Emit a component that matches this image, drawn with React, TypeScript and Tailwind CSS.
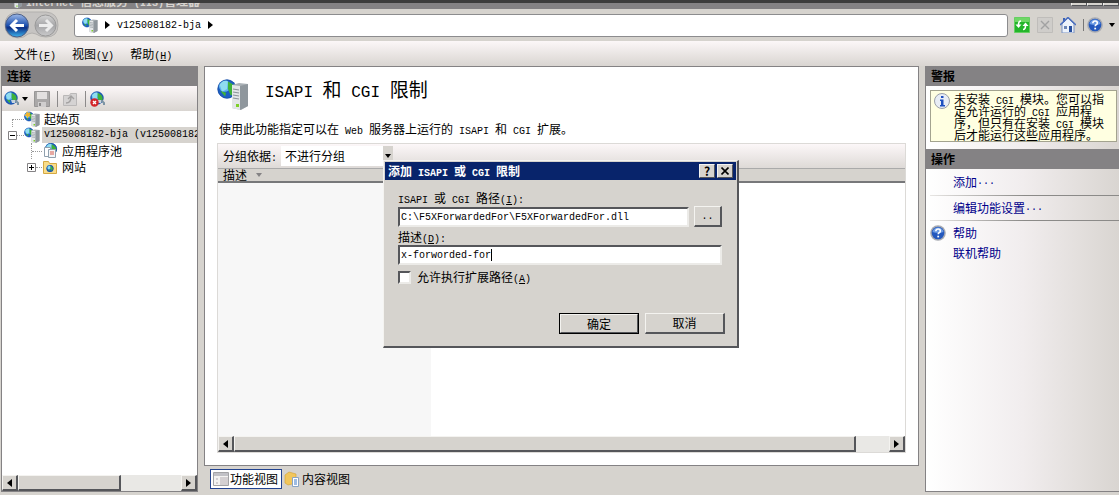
import { useState, type ReactNode } from 'react';

const RAISED =
  'border border-t-[#f4f3f0] border-l-[#f4f3f0] border-r-[#55565a] border-b-[#55565a] bg-[#d6d3ce]';
const SUNKEN =
  'border-2 border-t-[#55565a] border-l-[#55565a] border-r-[#ecebe8] border-b-[#ecebe8] bg-white';

// Latin runs use a half-width monospace face next to the full-width CJK glyphs
function Mixed({ text, latin = 'text-[10px]' }: { text: string; latin?: string }) {
  const runs = text.split(/([\x20-\x7e]+)/).filter(Boolean);
  return (
    <>
      {runs.map((run, i) =>
        /^[\x20-\x7e]/.test(run) ? (
          <span key={i} className={`leading-0 whitespace-pre-wrap font-['Liberation_Mono',monospace] ${latin}`}>
            {run}
          </span>
        ) : (
          run
        ),
      )}
    </>
  );
}

function Key({ letter }: { letter: string }) {
  return (
    <span className="font-['Liberation_Mono',monospace] text-[10px] leading-0">
      (<u>{letter}</u>)
    </span>
  );
}

function Globe({ cx, cy, r }: { cx: number; cy: number; r: number }) {
  return (
    <g>
      <circle cx={cx} cy={cy} r={r} fill="#1d5fc4" />
      <circle cx={cx - r * 0.25} cy={cy - r * 0.3} r={r * 0.6} fill="#5fb4f0" />
      <path
        d={`M${cx - r * 0.8} ${cy - r * 0.5} Q${cx - r * 0.2} ${cy - r * 1.1} ${cx + r * 0.1} ${cy - r * 0.8} L${cx} ${cy} L${cx - r * 0.5} ${cy + r * 0.3} Z`}
        fill="#8fdcf0"
      />
      <path
        d={`M${cx + r * 0.1} ${cy - r * 0.8} Q${cx + r} ${cy - r * 0.4} ${cx + r * 0.9} ${cy + r * 0.3} L${cx + r * 0.4} ${cy + r * 0.7} L${cx + r * 0.1} ${cy} Z`}
        fill="#3fb23a"
      />
      <path
        d={`M${cx - r * 0.7} ${cy + r * 0.2} L${cx - r * 0.1} ${cy + r * 0.4} L${cx - r * 0.2} ${cy + r * 0.8} Z`}
        fill="#3fb23a"
      />
      <circle cx={cx} cy={cy} r={r - 0.3} fill="none" stroke="#17499b" strokeWidth="0.6" />
    </g>
  );
}

function ServerIcon({ className = 'size-4', star = false }: { className?: string; star?: boolean }) {
  return (
    <svg viewBox="0 0 32 32" className={`shrink-0 ${className}`}>
      <Globe cx={10} cy={11} r={9.5} />
      {star && <path d="M6 0l2 4 5-2-2 5 3 3-5 1-2 4-2-5-5-1 4-3z" fill="#f3b42c" />}
      <path d="M15 7l7-2 9 1v22l-7 4-9-2z" fill="#a9b0b5" />
      <path d="M15 7l8 1v24l-8-2z" fill="#e3e6e8" />
      <path d="M23 8l8-2v22l-8 4z" fill="#8f979d" />
      <path d="M16 11l6 1M16 14l6 1M16 17l6 1M16 20l6 1" stroke="#8a9299" strokeWidth="1.2" />
      <path d="M19 26h3v3h-3z" fill="#7fd02a" />
    </svg>
  );
}

function ConnectIcon({ remove = false }: { remove?: boolean }) {
  return (
    <svg viewBox="0 0 16 16" className="size-4 shrink-0">
      <Globe cx={7} cy={7} r={6.5} />
      <path d="M8 10h4l2 2v2" fill="none" stroke="#7c94a4" strokeWidth="2" />
      <path d="M7 9h4v3H8z" fill="#c6d4dc" />
      {remove && (
        <g>
          <circle cx="4.5" cy="11.5" r="4.2" fill="#d3262b" />
          <path d="M3 10l3 3M6 10l-3 3" stroke="#fff" strokeWidth="1.4" />
        </g>
      )}
    </svg>
  );
}

function HelpIcon() {
  return (
    <svg viewBox="0 0 16 16" className="size-4 shrink-0">
      <circle cx="8" cy="8" r="7.8" fill="#a8abb2" />
      <circle cx="8" cy="8" r="6.3" fill="#2458bd" />
      <path d="M2.5 7a5.6 5.6 0 0 1 11 0q-5.5 2-11 0" fill="#6c9be4" />
      <path
        d="M5.8 6.2q.2-2.2 2.3-2.2 2.2 0 2.2 1.9 0 1.2-1.2 1.8-.9.5-.9 1.5"
        fill="none"
        stroke="#fff"
        strokeWidth="1.6"
      />
      <path d="M7.3 10.7h1.8v1.7H7.3z" fill="#fff" />
    </svg>
  );
}

function NavButtons() {
  return (
    <div className="relative flex h-7 w-14 shrink-0 items-center gap-1">
      <svg viewBox="0 0 56 28" className="absolute inset-0 size-full">
        <defs>
          <linearGradient id="back" x2="0" y2="1">
            <stop offset="0" stopColor="#9db9e8" />
            <stop offset=".5" stopColor="#1c4fae" />
            <stop offset=".6" stopColor="#0d2f86" />
            <stop offset="1" stopColor="#3cb4ee" />
          </linearGradient>
          <linearGradient id="fwd" x2="0" y2="1">
            <stop offset="0" stopColor="#d3d3d3" />
            <stop offset=".5" stopColor="#a6a6a8" />
            <stop offset="1" stopColor="#c9c9ca" />
          </linearGradient>
        </defs>
        <path
          d="M14 1h28q12 1 12 13t-12 12q-6 0-10-3-4-2-8 0-4 4-10 4Q1 26 1 14T14 1"
          fill="#c6c4c2"
          stroke="#b2b0ae"
        />
        <circle cx="13" cy="14.5" r="11.5" fill="url(#back)" stroke="#4d5f86" />
        <circle cx="41.500" cy="14.500" r="10.500" fill="url(#fwd)" stroke="#999" />
        <path d="M20 14.5H8M13 9l-5.500 5.500L13 20" fill="none" stroke="#fff" strokeWidth="3" />
        <path d="M35 14.500h12M42 9l5.500 5.500L42 20" fill="none" stroke="#ececec" strokeWidth="3" />
      </svg>
      <button aria-label="后退" className="relative h-7 w-6 rounded-full" />
      <button aria-label="前进" className="relative h-7 w-6 rounded-full" />
    </div>
  );
}

function Caret({ className = 'h-1 w-1.5 text-black' }: { className?: string }) {
  return (
    <svg viewBox="0 0 6 4" className={`shrink-0 ${className}`}>
      <path d="M0 0h6L3 4z" fill="currentColor" />
    </svg>
  );
}

function Arrow({ left = false }: { left?: boolean }) {
  return (
    <svg viewBox="0 0 5 8" className="h-2 w-[5px] shrink-0">
      <path d={left ? 'M5 0v8L0 4z' : 'M0 0v8l5-4z'} fill="#000" />
    </svg>
  );
}

function ScrollBar({ thumb }: { thumb: string }) {
  return (
    <div className="flex h-4 shrink-0 bg-[#e9e8e5]">
      <button aria-label="向左" className={`flex w-4 items-center justify-center ${RAISED} border-r-2 border-b-2`}>
        <Arrow left />
      </button>
      <div className="flex flex-1">
        <div className={`${thumb} ${RAISED} border-r-2 border-b-2`} />
      </div>
      <button aria-label="向右" className={`flex w-4 items-center justify-center ${RAISED} border-r-2 border-b-2`}>
        <Arrow />
      </button>
    </div>
  );
}

function PanelHeader({ children }: { children: ReactNode }) {
  return (
    <h2 className="h-5 shrink-0 bg-[#848284] px-[5px] text-[12px] leading-5 font-bold text-black">{children}</h2>
  );
}

function TitleStrip() {
  return (
    <div className="flex h-[9px] shrink-0 items-end justify-between overflow-hidden border-t-[3px] border-[#3c3c3c] bg-[#848284] pl-2">
      <div className="flex h-4 items-center gap-1 text-[12px] leading-4 whitespace-nowrap text-[#d6d3ce]">
        <ServerIcon className="size-3.5" />
        <span className="font-bold">
          <Mixed text="Internet 信息服务 (IIS)管理器" />
        </span>
      </div>
      <div className="flex items-end">
        {['最小化', '最大化', '关闭'].map((label) => (
          <button key={label} aria-label={label} className={`mb-[3px] h-3 w-4 ${RAISED}`} />
        ))}
      </div>
    </div>
  );
}

function AddressBar() {
  return (
    <div className="flex h-8 shrink-0 items-center gap-3.5 bg-[#d6d3ce] pr-1 pl-1">
      <NavButtons />
      <div className="flex h-[23px] flex-1 items-center gap-[7px] rounded-[3px] border border-[#8c8c8e] bg-white pl-[7px]">
        <ServerIcon />
        <Arrow />
        <span className="font-['Liberation_Mono',monospace] text-[10px]">v125008182-bja</span>
        <Arrow />
      </div>
      <div className="-ml-2 flex items-center gap-[7px]">
        <button aria-label="刷新">
          <svg viewBox="0 0 16 16" className="size-4">
            <path d="M.5.5h15v15H.5z" fill="#23b52a" stroke="#66cf62" />
            <path d="M1 1h14v4H1z" fill="#6fd766" />
            <path d="M7 4Q4.500 4 4.500 8" fill="none" stroke="#fff" strokeWidth="1.600" />
            <path d="M1.500 7.500h6l-3 3.500z" fill="#fff" />
            <path d="M9 12.500q2.500 0 2.500-4" fill="none" stroke="#fff" strokeWidth="1.600" />
            <path d="M8.500 9h6l-3-3.500z" fill="#fff" />
          </svg>
        </button>
        <button aria-label="停止">
          <svg viewBox="0 0 16 16" className="size-4">
            <path d="M.5.5h15v15H.5z" fill="#cfcdca" stroke="#bfbdba" />
            <path d="M4 4l8 8M12 4l-8 8" stroke="#a2a2a2" strokeWidth="1.4" />
          </svg>
        </button>
        <button aria-label="主页">
          <svg viewBox="0 0 16 16" className="size-4">
            <path d="M2 7l6-6 6 6v9H2z" fill="#edf3fb" stroke="#7d93c0" />
            <path d="M3 1h2v4H3z" fill="#3c62b5" />
            <path d="M0 8l8-7.500L16 8" fill="none" stroke="#4c70bf" strokeWidth="1.600" />
            <path d="M9 9h3v6H9z" fill="#274f9e" />
            <path d="M4 9h3v3H4z" fill="#6c86b5" />
          </svg>
        </button>
        <span className="h-3 w-px bg-[#777]" />
        <button aria-label="帮助" className="-ml-1 flex items-center gap-1.5">
          <HelpIcon />
          <Caret />
        </button>
      </div>
    </div>
  );
}

function MenuBar() {
  const items = [
    ['文件', 'F'],
    ['视图', 'V'],
    ['帮助', 'H'],
  ];
  return (
    <nav className="flex h-[25px] shrink-0 items-center gap-4 bg-linear-to-b from-[#fcf7f8] to-[#d9d5d1] pl-3.5">
      {items.map(([label, key]) => (
        <button key={key} className="text-[12px]">
          {label}
          <Key letter={key} />
        </button>
      ))}
    </nav>
  );
}

function Expander({ open = false }: { open?: boolean }) {
  return (
    <svg viewBox="0 0 9 9" className="size-[9px] shrink-0">
      <path d="M.5.5h8v8h-8z" fill="#fff" stroke="#848284" />
      <path d={open ? 'M2 4.5h5' : 'M2 4.5h5M4.5 2v5'} stroke="#000" />
    </svg>
  );
}

const DASH = 'h-px shrink-0 border-t border-dotted border-[#999]';

function Connections() {
  return (
    <aside className="flex min-h-0 flex-col border-x border-b border-[#848284] bg-white">
      <PanelHeader>连接</PanelHeader>
      <div className="flex h-[25px] shrink-0 items-center bg-linear-to-b from-[#fcf7f8] to-[#d9d5d1] pl-0.5">
        <button aria-label="连接" className="flex items-center gap-0.5">
          <ConnectIcon />
          <Caret />
        </button>
        <button aria-label="保存" className="ml-1.5">
          <svg viewBox="0 0 16 16" className="size-4">
            <path d="M.5.5h15v15H.5z" fill="#aaa8a8" stroke="#989696" />
            <path d="M3 1h10v7H3z" fill="#e3e0e0" />
            <path d="M4 11h8v5H4z" fill="#d0cece" />
            <path d="M5 12h2v3H5z" fill="#8c8a8a" />
          </svg>
        </button>
        <span className="ml-[7px] h-4 w-px bg-[#8c8a8a]" />
        <button aria-label="向上" className="ml-1">
          <svg viewBox="0 0 16 16" className="size-4">
            <path d="M1.5 4.5h6l1-2h6v12h-13z" fill="#d5d3d3" stroke="#bab8b8" />
            <path d="M4 12q5 0 5-6M6 8l3-3 3 3" fill="none" stroke="#a3a1a1" strokeWidth="1.4" />
          </svg>
        </button>
        <span className="ml-[7px] h-4 w-px bg-[#8c8a8a]" />
        <button aria-label="删除连接" className="ml-1">
          <ConnectIcon remove />
        </button>
      </div>
      <ul className="min-h-0 flex-1 overflow-hidden text-[12px] leading-4 whitespace-nowrap">
        <li className="flex h-4 items-center pl-2.5">
          <span className="h-2 w-3 shrink-0 self-end border-t border-l border-dotted border-[#999]" />
          <ServerIcon star />
          <span className="pl-1">起始页</span>
        </li>
        <li className="flex h-4 items-center pl-1.5">
          <Expander open />
          <span className={`${DASH} w-[7px]`} />
          <ServerIcon />
          <span className="ml-0.5 flex min-w-0 flex-1 overflow-hidden bg-[#d6d3ce] pl-0.5 font-['Liberation_Mono',monospace] text-[10px] whitespace-nowrap">
            v125008182-bja (v125008182
          </span>
        </li>
        <li className="ml-[29px] flex h-4 items-center border-l border-dotted border-[#999]">
          <span className={`${DASH} w-2.5`} />
          <svg viewBox="0 0 16 16" className="size-4 shrink-0">
            <Globe cx={9} cy={6} r={6} />
            <path d="M2.5 4.5h6v9h-6z" fill="#fff" stroke="#8fa0ae" />
            <path d="M6.5 6.5h7v8h-7z" fill="#f4f6f8" stroke="#8fa0ae" />
            <path d="M8 9h4M8 11h4" stroke="#d85a4a" />
          </svg>
          <span className="pl-1">应用程序池</span>
        </li>
        <li className="flex h-4 items-center pl-[25px]">
          <Expander />
          <span className={`${DASH} w-1.5`} />
          <svg viewBox="0 0 16 16" className="size-4 shrink-0">
            <path d="M1.5 2.5h5l1 2h7v10h-13z" fill="#f9dd8a" stroke="#d5a944" />
            <Globe cx={8} cy={9.5} r={3.5} />
          </svg>
          <span className="pl-1">网站</span>
        </li>
      </ul>
      <ScrollBar thumb="w-[63%]" />
    </aside>
  );
}

function RestrictionsPage() {
  return (
    <main className="flex min-h-0 flex-1 flex-col border border-[#848284] bg-white px-3 pb-3">
      <div className="flex h-11 shrink-0 items-center gap-4">
        <ServerIcon className="mt-2.5 size-8" />
        <h1 className="text-[19px] leading-6">
          <Mixed text="ISAPI 和 CGI 限制" latin="text-[16px]" />
        </h1>
      </div>
      <p className="mt-2 h-5 shrink-0 pl-0.5 text-[12px] leading-5">
        <Mixed text="使用此功能指定可以在 Web 服务器上运行的 ISAPI 和 CGI 扩展。" />
      </p>
      <div className="mt-1 flex min-h-0 flex-1 flex-col border border-[#dcdad7]">
        <div className="flex h-6 shrink-0 items-center bg-linear-to-b from-[#fcf7f8] to-[#dedad7] pl-[5px] text-[12px]">
          <label htmlFor="group">
            分组依据
            <Mixed text=":" />
          </label>
          <div className="relative ml-1">
            <select id="group" className="block h-5 w-28 appearance-none bg-white pl-1 text-[12px] leading-5">
              <option>不进行分组</option>
            </select>
            <span className="pointer-events-none absolute inset-y-0 right-0 flex w-2.5 items-center justify-center bg-[#d6d3ce]">
              <Caret />
            </span>
          </div>
        </div>
        <table className="w-full shrink-0">
          <thead>
            <tr className="border-t border-b-2 border-t-[#aaa] border-b-[#77787a] bg-[#d6d3ce] text-left text-[12px] leading-3">
              <th className="pl-[5px] font-normal">
                <span className="flex items-center gap-2">
                  描述
                  <Caret className="h-1 w-2 text-[#848284]" />
                </span>
              </th>
            </tr>
          </thead>
        </table>
        <div className="flex-1">
          <div className="h-full w-[213px] bg-[#f7f7f7]" />
        </div>
        <ScrollBar thumb="w-[95%]" />
      </div>
    </main>
  );
}

function ViewTabs() {
  return (
    <div className="flex h-[26px] shrink-0 items-center gap-0.5 pl-1.5 text-[12px]">
      <button className="flex h-5 items-center gap-px border border-[#22438f] bg-white px-0.5 pr-[3px]">
        <svg viewBox="0 0 16 16" className="size-4">
          <path d="M.5 1.5h15v13H.5z" fill="#f4f3f1" stroke="#a3a3a5" />
          <path d="M1 2h14v3H1z" fill="#c1c1c6" />
          <path d="M3 7h2v2H3zM3 11h2v2H3zM7 6h8v8H7z" fill="#d4d0d2" />
        </svg>
        功能视图
      </button>
      <button className="flex h-5 items-center gap-0.5">
        <svg viewBox="0 0 16 16" className="size-4">
          <path d="M1 4l4-3 7 2v9l-8 2-3-2z" fill="#f1c65c" stroke="#d29f32" strokeWidth=".6" />
          <path d="M8.5 6.5h6v9h-6z" fill="#fff" stroke="#89a4c5" />
          <path d="M10 9h3M10 11h3M10 13h3" stroke="#3e78c5" />
        </svg>
        内容视图
      </button>
    </div>
  );
}

function ActionsPanel() {
  const rule = 'h-px bg-linear-to-r from-[#e8e6e4] via-[#8b8a88] to-[#8b8a88]';
  return (
    <aside className="flex min-h-0 flex-col border-b border-l border-[#848284] bg-linear-to-r from-white via-[#f1edee] to-[#d9d5d1]">
      <PanelHeader>警报</PanelHeader>
      <div className="mt-1 mr-0.5 ml-1 flex h-[52px] shrink-0 gap-1 border border-[#a3a38f] bg-[#ffffe1] pl-[3px]">
        <svg viewBox="0 0 16 16" className="mt-0.5 size-4 shrink-0">
          <circle cx="8" cy="8" r="7.5" fill="#e8edf5" stroke="#9a9fa8" />
          <path d="M7 3h2.5v2H7zM6 6.500h3.500V12H11v1.500H6V12h1V8H6z" fill="#1e50c0" />
        </svg>
        <p className="pt-0.5 text-[12px] leading-3">
          <Mixed text="未安装 CGI 模块。您可以指定允许运行的 CGI 应用程序，但只有在安装 CGI 模块后才能运行这些应用程序。" />
        </p>
      </div>
      <div className="mt-[7px] flex flex-col">
        <PanelHeader>操作</PanelHeader>
      </div>
      <div className="flex flex-col pl-1 text-[12px] text-[#00008b]">
        <a href="#add" className="flex h-[26px] items-center pl-[23px]">
          <Mixed text="添加..." />
        </a>
        <div className={rule} />
        <a href="#edit" className="flex h-6 items-center pl-[23px]">
          <Mixed text="编辑功能设置..." />
        </a>
        <div className={rule} />
        <a href="#help" className="flex h-6 items-center gap-[7px]">
          <HelpIcon />
          帮助
        </a>
        <a href="#online" className="flex h-4 items-center pl-[23px]">
          联机帮助
        </a>
      </div>
    </aside>
  );
}

function AddDialog() {
  const [path, setPath] = useState('C:\\F5XForwardedFor\\F5XForwardedFor.dll');
  const [description, setDescription] = useState('x-forworded-for');
  const field = `h-5 px-px font-['Liberation_Mono',monospace] text-[10px] outline-none ${SUNKEN}`;
  return (
    <div
      role="dialog"
      aria-label="添加 ISAPI 或 CGI 限制"
      className={`absolute top-40 left-[383px] h-[188px] w-[356px] text-[12px] ${RAISED} border-r-2 border-b-2`}
    >
      <div className="mx-px mt-px flex h-[18px] items-center gap-0.5 bg-[#08246b] px-[3px] font-bold text-white">
        <span className="flex-1">
          <Mixed text="添加 ISAPI 或 CGI 限制" />
        </span>
        <button
          aria-label="帮助"
          className={`flex h-3.5 w-4 items-center justify-center text-[12px] text-black ${RAISED}`}
        >
          ?
        </button>
        <button aria-label="关闭" className={`flex h-3.5 w-4 items-center justify-center ${RAISED}`}>
          <svg viewBox="0 0 8 8" className="size-2">
            <path d="M.5.5l7 7M7.5.5l-7 7" stroke="#000" strokeWidth="1.6" />
          </svg>
        </button>
      </div>
      <div className="flex flex-col px-3.5 pt-2.5">
        <label htmlFor="path" className="h-4 leading-4">
          <Mixed text="ISAPI 或 CGI 路径" />
          <Key letter="I" />
          <Mixed text=":" />
        </label>
        <div className="flex items-start gap-[5px]">
          <input
            id="path"
            value={path}
            onChange={(e) => setPath(e.target.value)}
            className={`mt-px w-[291px] ${field}`}
          />
          <button className={`h-[21px] w-7 font-['Liberation_Mono',monospace] text-[10px] ${RAISED} border-r-2 border-b-2`}>
            ..
          </button>
        </div>
        <label htmlFor="description" className="mt-0.5 h-4 leading-4">
          描述
          <Key letter="D" />
          <Mixed text=":" />
        </label>
        <div className="relative flex">
          <input
            id="description"
            value={description}
            onChange={(e) => setDescription(e.target.value)}
            className={`w-[324px] caret-transparent ${field}`}
          />
          {/* 6px per character after the border and padding */}
          <span
            className="pointer-events-none absolute top-1 h-3 w-px bg-black"
            style={{ left: 3 + description.length * 6 }}
          />
        </div>
        <label className="mt-1 flex h-4 items-center gap-1.5">
          <input type="checkbox" className={`size-[13px] appearance-none ${SUNKEN}`} />
          <span>
            允许执行扩展路径
            <Key letter="A" />
          </span>
        </label>
      </div>
      <div className="mt-7 flex justify-end gap-1.5 pr-3">
        <button className="h-[21px] w-20 border border-black bg-[#d6d3ce]">
          <span className={`flex size-full items-center justify-center ${RAISED}`}>确定</span>
        </button>
        <button className={`flex h-[21px] w-20 items-center justify-center ${RAISED} border-r-2 border-b-2`}>取消</button>
      </div>
    </div>
  );
}

export default function App() {
  return (
    <div className="relative flex h-screen flex-col overflow-hidden bg-[#d6d3ce] pb-[3px] font-['Noto_Sans_CJK_SC',sans-serif] text-black">
      <TitleStrip />
      <AddressBar />
      <MenuBar />
      <div className="grid min-h-0 flex-1 grid-cols-[197px_minmax(0,1fr)_194px] gap-x-1.5 pl-px">
        <Connections />
        <div className="flex min-h-0 flex-col">
          <RestrictionsPage />
          <ViewTabs />
        </div>
        <ActionsPanel />
      </div>
      <AddDialog />
    </div>
  );
}
